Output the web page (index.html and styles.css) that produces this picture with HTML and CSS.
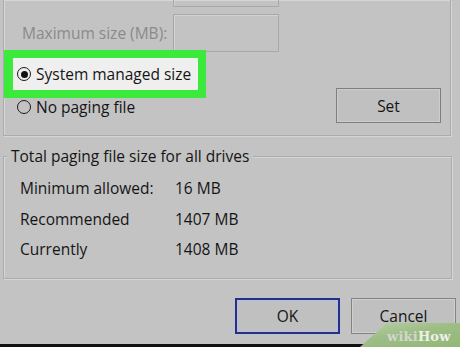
FILE: index.html
```html
<!DOCTYPE html>
<html>
<head>
<meta charset="utf-8">
<link rel="stylesheet" href="styles.css">
</head>
<body>
<div class="page">
  <div class="group group-size">
    <div class="row row-top"><div class="textbox"></div></div>
    <div class="row row-max">
      <span class="label disabled">Maximum size (MB):</span>
      <div class="textbox"></div>
    </div>
    <div class="row row-opts">
      <div class="opts">
        <div class="highlight">
          <div class="radio"><span class="dot checked"></span><span>System managed size</span></div>
        </div>
        <div class="radio plain"><span class="dot"></span><span>No paging file</span></div>
      </div>
      <button class="btn btn-set">Set</button>
    </div>
  </div>

  <div class="group group-total">
    <div class="legend">Total paging file size for all drives</div>
    <div class="stats">
      <span>Minimum allowed:</span><span>16 MB</span>
      <span>Recommended</span><span>1407 MB</span>
      <span>Currently</span><span>1408 MB</span>
    </div>
  </div>

  <div class="footer">
    <button class="btn btn-ok">OK</button>
    <button class="btn btn-cancel">Cancel</button>
  </div>
  <div class="strip"></div>

  <div class="watermark"><span class="wm-wiki">wiki</span><span class="wm-how">How</span></div>
</div>
</body>
</html>
```
FILE: styles.css
```css
* { box-sizing: border-box; }
html, body { margin: 0; padding: 0; }
body {
  width: 460px;
  height: 347px;
  overflow: hidden;
  background: #c3c3c3;
  font-family: "Open Sans", "Noto Sans", sans-serif;
  font-size: 15.5px;
  color: #151515;
}
.page {
  position: relative;
  width: 460px;
  height: 347px;
  display: flex;
  flex-direction: column;
}
.group {
  border: 1px solid #acacac;
  box-shadow: 1px 1px 0 #d6d6d6, inset 1px 1px 0 #d6d6d6;
}
.group-size {
  margin-left: 3px;
  width: 448px;
  height: 136px;
  border-top: none;
  display: flex;
  flex-direction: column;
  flex: none;
}
.row { display: flex; }
.textbox {
  width: 106px;
  height: 38px;
  border: 1px solid #a8a8a8;
  box-shadow: inset 1px 1px 0 #d2d2d2;
}
.row-top { margin-top: -31px; padding-left: 169px; }
.row-max {
  margin-top: 7px;
  display: grid;
  grid-template-columns: 169px 106px;
  align-items: center;
}
.label { padding-left: 18px; line-height: 20px; }
.disabled { color: #8a8a8a; }
.row-opts { margin-top: -2px; }
.opts { display: flex; flex-direction: column; }
.highlight {
  width: 202px;
  height: 48px;
  border: 8px solid #3bea3b;
  border-left-width: 9px;
  background: #efefef;
  display: flex;
  align-items: center;
  padding-left: 4px;
}
.radio {
  display: flex;
  align-items: center;
  gap: 5px;
  line-height: 20px;
  white-space: nowrap;
}
.radio.plain { padding-left: 13px; height: 20px; margin-top: -1px; }
.dot {
  width: 14px;
  height: 14px;
  border-radius: 50%;
  border: 1.5px solid #1a1a1a;
  display: flex;
  align-items: center;
  justify-content: center;
  flex: none;
}
.dot.checked::after {
  content: "";
  width: 7px;
  height: 7px;
  border-radius: 50%;
  background: #111;
}
.btn {
  font-family: inherit;
  font-size: 15.5px;
  color: #151515;
  background: #c0c0c0;
  padding: 0;
  width: 105px;
  height: 36px;
}
.btn-set {
  margin: 38px 9px 0 auto;
  height: 35px;
  border: 1px solid #7e7e7e;
  box-shadow: inset 0 0 0 1px #cdcdcd;
}
.group-total {
  margin: 20px 0 0 3px;
  width: 449px;
  height: 123px;
  flex: none;
}
.legend {
  display: block;
  width: max-content;
  margin: -11px 0 0 3px;
  padding: 0 4px;
  line-height: 20px;
  background: #c3c3c3;
}
.stats {
  margin-top: 7px;
  display: grid;
  grid-template-columns: 155px auto;
  grid-auto-rows: 30.5px;
  align-items: center;
  padding-left: 16px;
  line-height: 20px;
}
.footer {
  margin-top: 19px;
  display: flex;
  justify-content: flex-end;
  gap: 11px;
  padding-right: 4px;
  flex: none;
}
.btn-ok {
  border: 2px solid #20308c;
  box-shadow: inset 0 0 0 1px #b9bde0;
}
.btn-cancel {
  border: 1px solid #838383;
  box-shadow: inset 0 0 0 1px #cfcfcf;
}
.strip {
  margin-top: 10px;
  height: 3px;
  background: #111;
  flex: none;
}
.watermark {
  position: absolute;
  left: 360px;
  right: 0;
  bottom: 0;
  height: 24px;
  background: linear-gradient(170deg, #b8cfa6 0%, #9dbd84 45%, #93b778 100%);
  clip-path: polygon(27px 0, 100% 0, 100% 100%, 0 100%);
  font-family: "DejaVu Serif", serif;
  font-weight: bold;
  font-size: 13px;
  line-height: 24px;
  padding-left: 27px;
  padding-top: 2px;
  letter-spacing: 0.2px;
}
.wm-wiki { color: #d3d6cf; }
.wm-how { color: #edf0ea; }
```
